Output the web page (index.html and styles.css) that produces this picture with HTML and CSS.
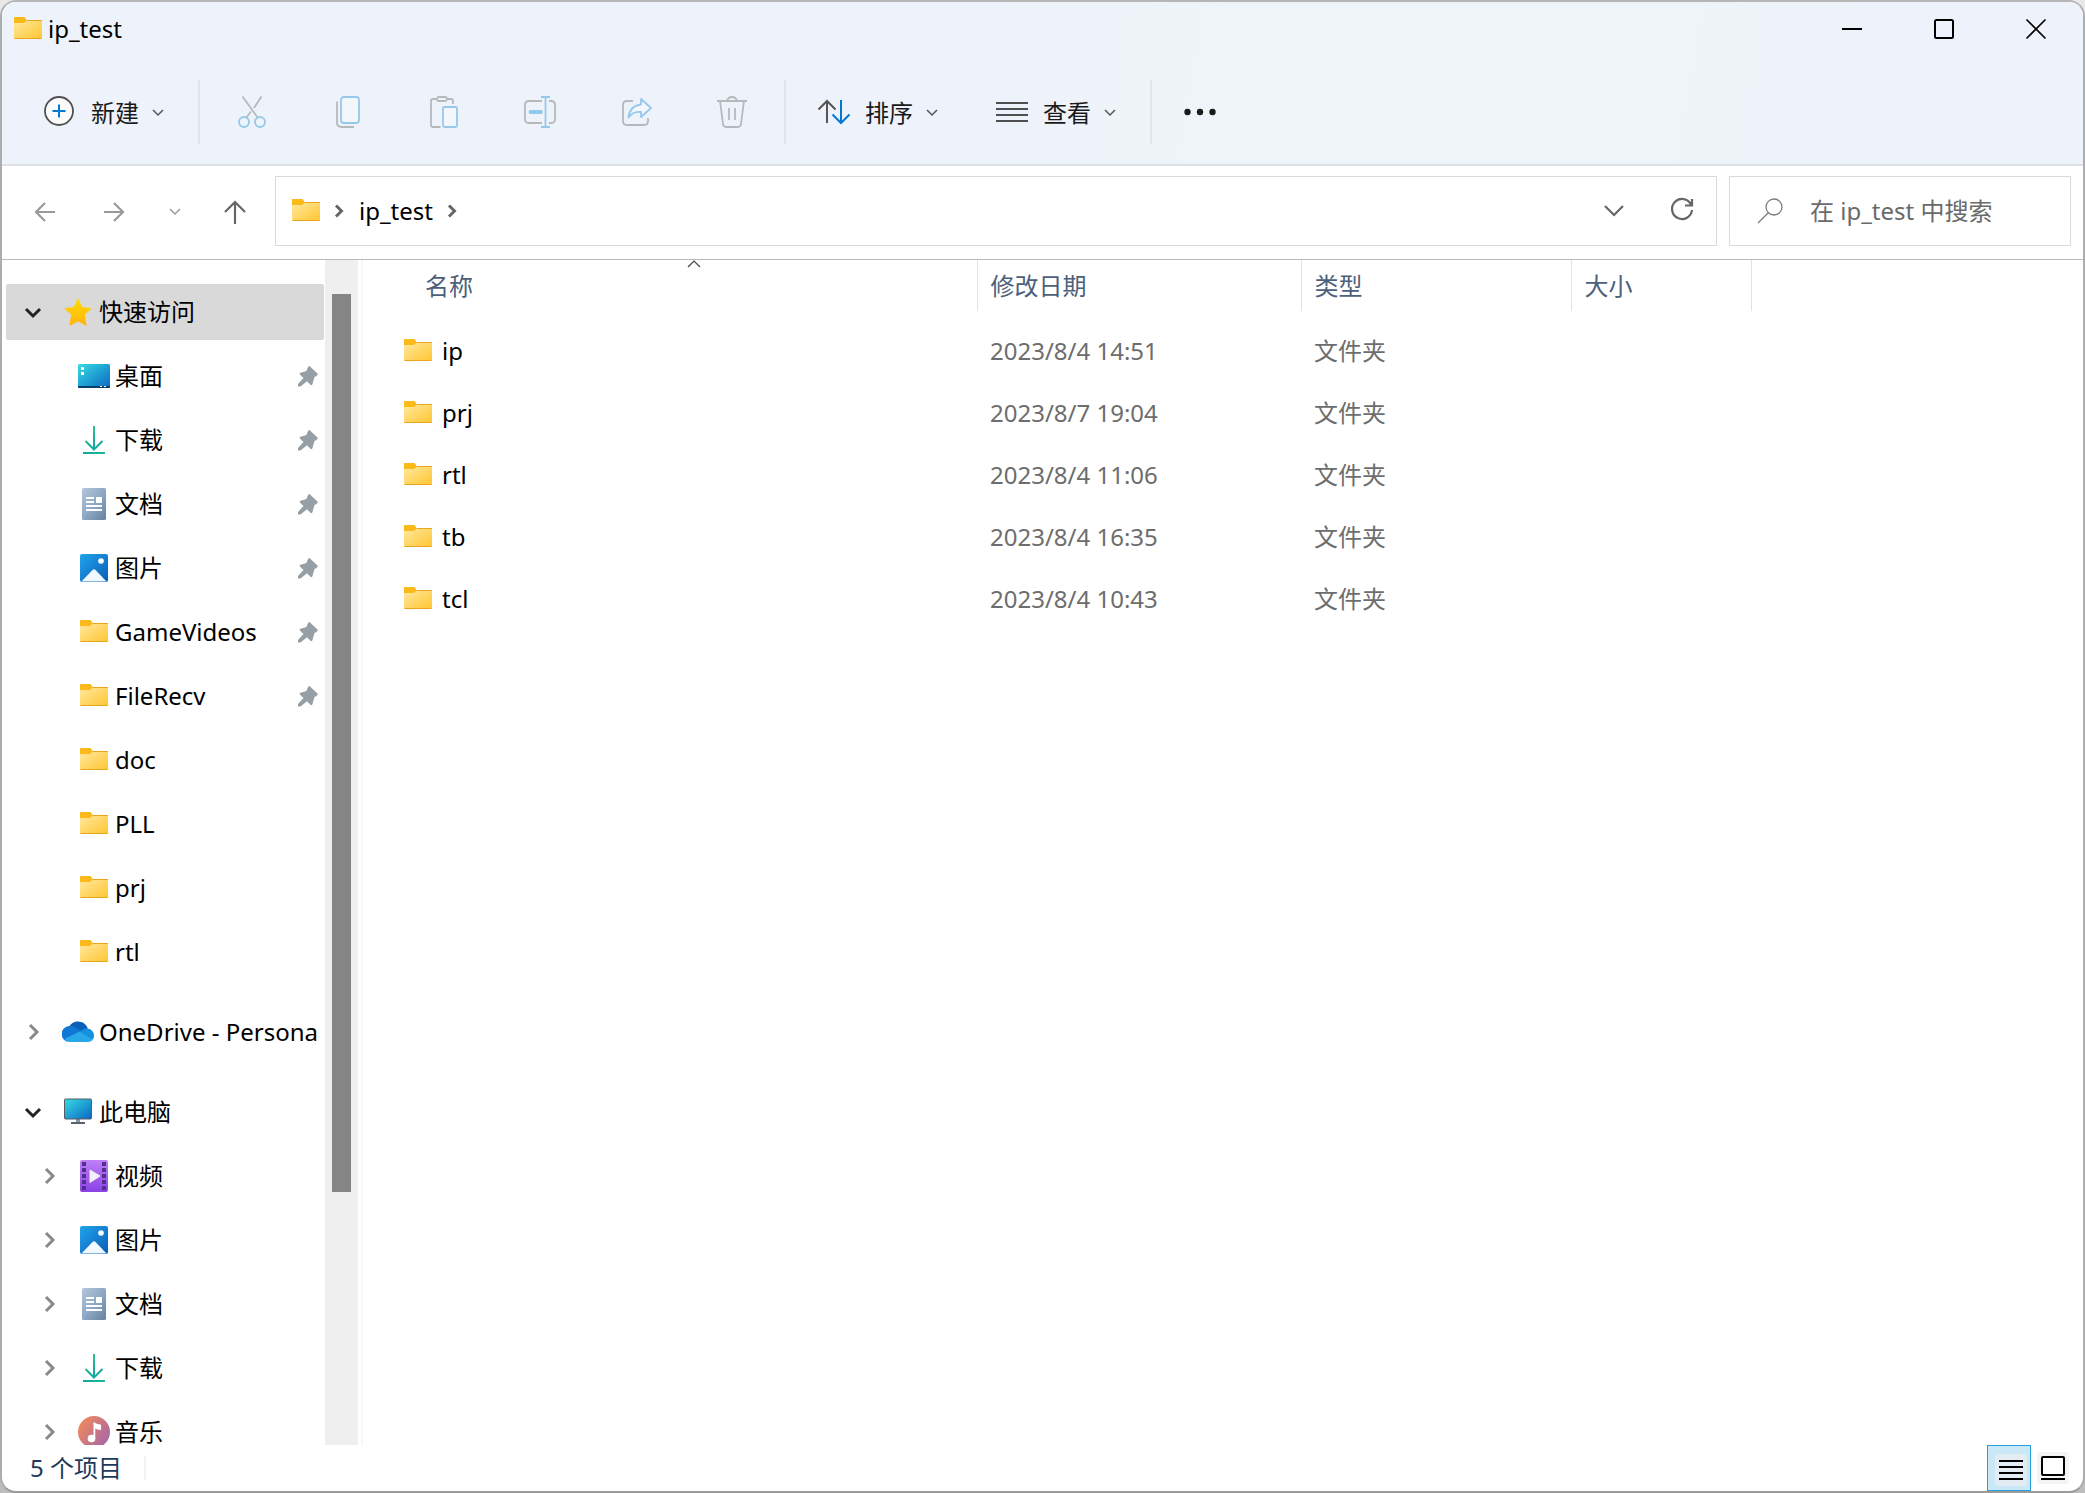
FILE: index.html
```html
<!DOCTYPE html>
<html lang="zh-CN">
<head>
<meta charset="utf-8">
<title>ip_test</title>
<link rel="stylesheet" href="styles.css">
</head>
<body>
<svg class="sprite" aria-hidden="true">
  <defs>
    <linearGradient id="g-folder" x1="0" y1="0" x2="1" y2="1"><stop offset="0" stop-color="#ffe8a0"/><stop offset="1" stop-color="#ffc62f"/></linearGradient>
    <linearGradient id="g-star" x1="0" y1="0" x2="0" y2="1"><stop offset="0" stop-color="#ffdc00"/><stop offset="1" stop-color="#ffb30f"/></linearGradient>
    <linearGradient id="g-screen" x1="0" y1="0" x2="1" y2="1"><stop offset="0" stop-color="#36dce4"/><stop offset="1" stop-color="#0a66c2"/></linearGradient>
    <linearGradient id="g-down" gradientUnits="userSpaceOnUse" x1="5" y1="3" x2="27" y2="29"><stop offset="0" stop-color="#3ccf86"/><stop offset="0.6" stop-color="#12a79b"/><stop offset="1" stop-color="#1dbb9a"/></linearGradient>
    <linearGradient id="g-doc" x1="0" y1="0" x2="1" y2="1"><stop offset="0" stop-color="#b4c7da"/><stop offset="0.5" stop-color="#8fa9c5"/><stop offset="1" stop-color="#65829f"/></linearGradient>
    <linearGradient id="g-pic" x1="0" y1="0" x2="1" y2="1"><stop offset="0" stop-color="#1fa5ec"/><stop offset="1" stop-color="#0b5cb4"/></linearGradient>
    <linearGradient id="g-video" x1="0" y1="0" x2="0" y2="1"><stop offset="0" stop-color="#bd80f8"/><stop offset="1" stop-color="#8b41e6"/></linearGradient>
    <linearGradient id="g-music" x1="0" y1="0.2" x2="1" y2="0.9"><stop offset="0" stop-color="#f28a5a"/><stop offset="1" stop-color="#a264ae"/></linearGradient>
  </defs>
  <symbol id="folder" viewBox="0 0 32 32">
    <path d="M2 5a1 1 0 0 1 1-1h8.500c1 0 1.500.4 2 1.200L14.500 7v5H2z" fill="#fbba1a"/>
    <path d="M2 11c0-1 .3-1 1-1h8.500c1 0 1.500-.5 2-1.200.6-.9 1.200-1.300 2-1.300H30V25a1 1 0 0 1-1 1H3a1 1 0 0 1-1-1z" fill="url(#g-folder)"/>
    <path d="M14.500 7.500H30M2.500 25.500h27" stroke="#e9a51d" stroke-width="1" fill="none"/>
  </symbol>
  <symbol id="star" viewBox="0 0 32 32"><path d="M16 2l4.200 9 9.800 1.200-7.300 6.600L24.800 30 16 25.500 7.200 30l2.100-11.200L2 12.200 11.800 11z" fill="url(#g-star)"/></symbol>
  <symbol id="desktop" viewBox="0 0 32 32"><rect y="4" width="32" height="24" rx="1.500" fill="url(#g-screen)"/><path d="M0 26h32v1a1 1 0 0 1-1 1H1a1 1 0 0 1-1-1z" fill="#0d3f66"/><path d="M3 7h3v3H3zM3 12h3v3H3zM22 26h2v1h-2zM26 26h2v1h-2z" fill="#fff"/></symbol>
  <symbol id="download" viewBox="0 0 32 32"><path d="M16 2v23M7.500 17l8.500 8.500 8.500-8.500M5 29h22" fill="none" stroke="url(#g-down)" stroke-width="2"/></symbol>
  <symbol id="document" viewBox="0 0 32 32"><rect x="4" width="24" height="32" rx="1.500" fill="url(#g-doc)"/><path d="M8 9h8v2H8zM8 13h8v2H8zM18 9h6v6h-6zM8 17h16v2H8zM8 21h16v2H8z" fill="#fff"/></symbol>
  <symbol id="picture" viewBox="0 0 32 32"><rect x="2" y="2" width="28" height="28" rx="2" fill="url(#g-pic)"/><path d="M3.500 29.500L14.500 18q1.500-1.500 3 0l11 11.500z" fill="#f1f8ff"/><circle cx="23" cy="9" r="2.800" fill="#fff"/></symbol>
  <symbol id="video" viewBox="0 0 32 32"><rect x="2" width="28" height="32" rx="2" fill="url(#g-video)"/><path d="M4 2h4v4H4zM4 8h4v4H4zM4 14h4v4H4zM4 20h4v4H4zM4 26h4v4H4zM24 2h4v4h-4zM24 8h4v4h-4zM24 14h4v4h-4zM24 20h4v4h-4zM24 26h4v4h-4z" fill="#50308c"/><path d="M12 10l10 6-10 6.500z" fill="#f4effa" stroke="#f4effa" stroke-linejoin="round"/></symbol>
  <symbol id="music" viewBox="0 0 32 32"><circle cx="16" cy="16" r="16" fill="url(#g-music)"/><circle cx="13.500" cy="22.500" r="3.800" fill="#fff"/><path d="M15.500 6q5 3 7.500 2.500v5.500q-3 0-5.700-1.500V23h-1.800z" fill="#fff"/></symbol>
  <symbol id="computer" viewBox="0 0 32 32"><path d="M14 22h4v5h-4z" fill="#8a96a3"/><path d="M9 26h14v2H9z" fill="#56636f"/><rect x="2.500" y="3" width="27" height="20" rx="1" fill="url(#g-screen)" stroke="#575d63" stroke-width="1"/></symbol>
  <symbol id="cloud" viewBox="0 0 32 32"><path d="M7.500 10.500C9 7 12.500 5.500 16 5.500c4.500 0 8.500 2.800 9.800 7L17 17z" fill="#0a5fb8"/><path d="M8 26a8 8 0 0 1-.8-16c3.500-.4 5.500 1 8.300 2.700L20 15.500 5 25z" fill="#1078d4"/><path d="M17 16l5.500-3.200c5-1.600 9.500 2 9.500 6.800 0 2-.8 3.500-1.800 4.600z" fill="#1490df"/><path d="M2.500 23L17.500 15.500 30.500 24c-1.200 1.300-2.700 2-4.500 2H8c-2.300 0-4.200-1.200-5.500-3z" fill="#28a8ea"/></symbol>
  <symbol id="pin" viewBox="0 0 22 22"><path d="M12.500 1L21 9q-.2 1.500-3.500 3l-2.200 7.500c-.4 1-1.100 1-1.800.3L10 16.300l-6.500 5.200H1V19l5.500-6L3 9.500c-.6-.7-.4-1.400.5-1.700L9.500 6c1-3.500 2-5 3-5z" fill="#959fa5"/></symbol>
  <symbol id="open" viewBox="0 0 24 24"><path d="M5 9l7 7 7-7" fill="none" stroke="#222" stroke-width="3"/></symbol>
  <symbol id="closed" viewBox="0 0 24 24"><path d="M9 5l7 7-7 7" fill="none" stroke="#8a8a8a" stroke-width="3"/></symbol>
  <symbol id="crumb" viewBox="0 0 12 24"><path d="M3 6.500l5.500 5.500L3 17.500" fill="none" stroke="#666" stroke-width="3"/></symbol>
  <symbol id="chev" viewBox="0 0 12 12"><path d="M1 4l5 5 5-5" fill="none" stroke="currentColor" stroke-width="1.500"/></symbol>
</svg>

<div class="window">
  <header class="head">
    <div class="titlebar">
      <svg class="icon"><use href="#folder"/></svg>
      <h1 class="title">ip_test</h1>
      <button class="caption" aria-label="最小化"><svg viewBox="0 0 20 20"><path d="M0 10h20" stroke="#000" stroke-width="2"/></svg></button>
      <button class="caption" aria-label="最大化"><svg viewBox="0 0 20 20"><rect x="1" y="1" width="18" height="18" rx="1.500" fill="none" stroke="#000" stroke-width="2"/></svg></button>
      <button class="caption" aria-label="关闭"><svg viewBox="0 0 20 20"><path d="M.5.500l19 19M19.500.500l-19 19" stroke="#000" stroke-width="1.600"/></svg></button>
    </div>
    <div class="toolbar">
      <button class="menu"><svg class="icon" viewBox="0 0 32 32"><circle cx="15" cy="15" r="14" fill="#fbfbfb" stroke="#505050" stroke-width="1.800"/><path d="M15 8.500v13M8.500 15h13" stroke="#0078d4" stroke-width="2"/></svg><span>新建</span><svg class="chev"><use href="#chev"/></svg></button>
      <span class="sep"></span>
      <button class="tool" aria-label="剪切"><svg class="icon" viewBox="0 0 32 32" fill="none" stroke-width="1.800"><path d="M6.500.500L22 22M25.500.500L18 12M15 15.500L10 22" stroke="#b6b9bb"/><circle cx="8" cy="26" r="5" stroke="#96c8ec"/><circle cx="24" cy="26" r="5" stroke="#96c8ec"/></svg></button>
      <button class="tool" aria-label="复制"><svg class="icon" viewBox="0 0 32 32" fill="none" stroke-width="1.800"><path d="M5 5.500v21q0 4.500 4.500 4.500H22" stroke="#b6b9bb"/><rect x="9" y="1" width="18" height="26" rx="3" fill="#f3f6fa" stroke="#96c8ec"/></svg></button>
      <button class="tool" aria-label="粘贴"><svg class="icon" viewBox="0 0 32 32" fill="none" stroke-width="1.800"><path d="M8 3H5Q3 3 3 5v24q0 2 2 2h7.500M19 3h3.500Q25 3 25 5v3" stroke="#b6b9bb"/><rect x="9" y="1" width="10" height="4" rx="2" stroke="#b6b9bb"/><rect x="15" y="11" width="14" height="20" rx="1.500" fill="#f3f6fa" stroke="#96c8ec"/></svg></button>
      <button class="tool" aria-label="重命名"><svg class="icon" viewBox="0 0 32 32" fill="none" stroke-width="1.800"><path d="M18 5H5Q1 5 1 9v14q0 4 4 4h13M25 5h2q4 0 4 4v14q0 4-4 4h-2" stroke="#b6b9bb"/><path d="M17 1h9M17 31h9M21.500 1v30" stroke="#96c8ec"/><path d="M6.500 16H17" stroke="#96c8ec" stroke-width="4" stroke-linecap="round"/></svg></button>
      <button class="tool" aria-label="共享"><svg class="icon" viewBox="0 0 32 32" fill="none" stroke-width="1.800"><path d="M13 5H7Q3 5 3 9v16q0 4 4 4h17q4 0 4-4v-3" stroke="#b6b9bb"/><path d="M21 3l10 9-10 9v-5q-8-1-12.500 5.500Q9.500 10 21 8.500z" fill="#f3f6fa" stroke="#96c8ec" stroke-linejoin="round"/></svg></button>
      <button class="tool" aria-label="删除"><svg class="icon" viewBox="0 0 32 32" fill="none" stroke="#b6b9bb" stroke-width="1.800"><path d="M1 5h30M11 5q1-4 5-4t5 4M4 5l3 23q.4 3 3 3h12q2.600 0 3-3l3-23M13 12v12M19 12v12"/></svg></button>
      <span class="sep"></span>
      <button class="menu"><svg class="icon" viewBox="0 0 32 32" fill="none" stroke-width="2"><path d="M9 27V5M.5 13.500L9 5l8.500 8.500" stroke="#555"/><path d="M23 4v23M14.500 18.500L23 27l8.500-8.500" stroke="#0078d4"/></svg><span>排序</span><svg class="chev"><use href="#chev"/></svg></button>
      <button class="menu"><svg class="icon" viewBox="0 0 32 32" stroke="#505050" stroke-width="2"><path d="M0 7h32M0 13h32M0 19h32M0 25h32"/></svg><span>查看</span><svg class="chev"><use href="#chev"/></svg></button>
      <span class="sep"></span>
      <button class="more" aria-label="查看更多"><svg class="icon" viewBox="0 0 32 32" fill="#1a1a1a"><circle cx="3.500" cy="16" r="3.200"/><circle cx="16" cy="16" r="3.200"/><circle cx="28.500" cy="16" r="3.200"/></svg></button>
    </div>
  </header>

  <nav class="addressrow" aria-label="地址栏">
    <button class="go" aria-label="后退"><svg class="arrow" viewBox="0 0 24 24"><path d="M21 13H2M11 4l-9 9 9 9" stroke="#999"/></svg></button>
    <button class="go" aria-label="前进"><svg class="arrow" viewBox="0 0 24 24"><path d="M2 13h19M12 4l9 9-9 9" stroke="#999"/></svg></button>
    <button class="go recent" aria-label="最近位置"><svg class="chev"><use href="#chev"/></svg></button>
    <button class="go up" aria-label="向上"><svg class="arrow" viewBox="0 0 24 24"><path d="M12 25V3M2 13L12 3l10 10" stroke="#666"/></svg></button>
    <div class="address">
      <svg class="icon"><use href="#folder"/></svg>
      <svg class="crumb"><use href="#crumb"/></svg>
      <a class="path" href="#">ip_test</a>
      <svg class="crumb"><use href="#crumb"/></svg>
      <button class="end" aria-label="历史记录"><svg class="arrow" viewBox="0 0 24 24"><path d="M3 7l9 9 9-9" stroke="#666"/></svg></button>
      <button class="end" aria-label="刷新"><svg class="arrow" viewBox="0 0 24 24"><path d="M21 5.500A10 10 0 1 0 22 11M22 0v6.500h-7" stroke="#666"/></svg></button>
    </div>
    <label class="search">
      <svg class="lens" viewBox="0 0 26 26" fill="none" stroke="#7b7b7b" stroke-width="1.300"><circle cx="17" cy="9" r="8"/><path d="M11.500 14.500L1 25"/></svg>
      <input type="search" placeholder="在 ip_test 中搜索" aria-label="搜索">
    </label>
  </nav>

  <main class="body">
    <div class="tree">
      <ul>
        <li><button class="row selected"><svg class="exp"><use href="#open"/></svg><svg class="icon"><use href="#star"/></svg><span>快速访问</span></button>
          <ul>
            <li><button class="row"><svg class="icon"><use href="#desktop"/></svg><span>桌面</span><svg class="pin"><use href="#pin"/></svg></button></li>
            <li><button class="row"><svg class="icon"><use href="#download"/></svg><span>下载</span><svg class="pin"><use href="#pin"/></svg></button></li>
            <li><button class="row"><svg class="icon"><use href="#document"/></svg><span>文档</span><svg class="pin"><use href="#pin"/></svg></button></li>
            <li><button class="row"><svg class="icon"><use href="#picture"/></svg><span>图片</span><svg class="pin"><use href="#pin"/></svg></button></li>
            <li><button class="row"><svg class="icon"><use href="#folder"/></svg><span>GameVideos</span><svg class="pin"><use href="#pin"/></svg></button></li>
            <li><button class="row"><svg class="icon"><use href="#folder"/></svg><span>FileRecv</span><svg class="pin"><use href="#pin"/></svg></button></li>
            <li><button class="row"><svg class="icon"><use href="#folder"/></svg><span>doc</span></button></li>
            <li><button class="row"><svg class="icon"><use href="#folder"/></svg><span>PLL</span></button></li>
            <li><button class="row"><svg class="icon"><use href="#folder"/></svg><span>prj</span></button></li>
            <li><button class="row"><svg class="icon"><use href="#folder"/></svg><span>rtl</span></button></li>
          </ul>
        </li>
        <li><button class="row"><svg class="exp"><use href="#closed"/></svg><svg class="icon"><use href="#cloud"/></svg><span>OneDrive - Persona</span></button></li>
        <li><button class="row"><svg class="exp"><use href="#open"/></svg><svg class="icon"><use href="#computer"/></svg><span>此电脑</span></button>
          <ul>
            <li><button class="row"><svg class="exp"><use href="#closed"/></svg><svg class="icon"><use href="#video"/></svg><span>视频</span></button></li>
            <li><button class="row"><svg class="exp"><use href="#closed"/></svg><svg class="icon"><use href="#picture"/></svg><span>图片</span></button></li>
            <li><button class="row"><svg class="exp"><use href="#closed"/></svg><svg class="icon"><use href="#document"/></svg><span>文档</span></button></li>
            <li><button class="row"><svg class="exp"><use href="#closed"/></svg><svg class="icon"><use href="#download"/></svg><span>下载</span></button></li>
            <li><button class="row"><svg class="exp"><use href="#closed"/></svg><svg class="icon"><use href="#music"/></svg><span>音乐</span></button></li>
          </ul>
        </li>
      </ul>
    </div>
    <div class="scrollbar"><div class="thumb"></div></div>
    <div class="files">
      <table>
        <colgroup><col class="c-name"><col class="c-date"><col class="c-type"><col class="c-size"><col></colgroup>
        <thead>
          <tr>
            <th class="name"><button>名称<svg class="sort" viewBox="0 0 14 8"><path d="M1 7l6-6 6 6" fill="none" stroke="#444" stroke-width="1.200"/></svg></button></th>
            <th><button>修改日期</button></th>
            <th><button>类型</button></th>
            <th><button>大小</button></th>
            <td></td>
          </tr>
        </thead>
        <tbody>
          <tr><td class="name"><a href="#"><svg class="icon"><use href="#folder"/></svg>ip</a></td><td>2023/8/4 14:51</td><td>文件夹</td><td></td><td></td></tr>
          <tr><td class="name"><a href="#"><svg class="icon"><use href="#folder"/></svg>prj</a></td><td>2023/8/7 19:04</td><td>文件夹</td><td></td><td></td></tr>
          <tr><td class="name"><a href="#"><svg class="icon"><use href="#folder"/></svg>rtl</a></td><td>2023/8/4 11:06</td><td>文件夹</td><td></td><td></td></tr>
          <tr><td class="name"><a href="#"><svg class="icon"><use href="#folder"/></svg>tb</a></td><td>2023/8/4 16:35</td><td>文件夹</td><td></td><td></td></tr>
          <tr><td class="name"><a href="#"><svg class="icon"><use href="#folder"/></svg>tcl</a></td><td>2023/8/4 10:43</td><td>文件夹</td><td></td><td></td></tr>
        </tbody>
      </table>
    </div>
  </main>

  <footer class="status">
    <span class="count">5 个项目</span>
    <button class="view on" aria-label="详细信息"><svg class="icon" viewBox="0 0 32 32"><rect width="32" height="32" rx="4" fill="#e2ecf2"/><path d="M4 7h24M4 13h24M4 19h24M4 25h24" stroke="#000" stroke-width="2"/></svg></button>
    <button class="view" aria-label="大缩略图"><svg class="icon" viewBox="0 0 32 32"><rect width="32" height="32" rx="4" fill="#f4f4f4"/><rect x="5" y="5" width="22" height="18" rx="1" fill="#fff" stroke="#000" stroke-width="2"/><path d="M4 27h24" stroke="#000" stroke-width="2"/></svg></button>
  </footer>
</div>
</body>
</html>
```

FILE: styles.css
```css
* { box-sizing: border-box; }

body {
  margin: 0;
  background: linear-gradient(#e9e9e9, #bdbdbd);
  color: #000;
  font: 24px/32px "Noto Sans", "Noto Sans CJK SC", sans-serif;
}

button, input {
  margin: 0;
  padding: 0;
  border: 0;
  background: none;
  color: inherit;
  font: inherit;
}

a { color: inherit; text-decoration: none; }
ul { margin: 0; padding: 0; list-style: none; }
svg { display: block; flex: none; overflow: visible; }

.sprite { position: absolute; width: 0; height: 0; overflow: hidden; }
.icon { width: 32px; height: 32px; }
.chev { width: 12px; height: 12px; }

.window {
  display: flex;
  flex-direction: column;
  height: 100vh;
  overflow: hidden;
  border: 2px solid #adadad;
  border-top-color: #b6b6b6;
  border-bottom-color: #9a9a9a;
  border-radius: 16px;
  background: #fff;
}

/* Title bar and command bar */
.head {
  border-bottom: 2px solid #dde2e6;
  background: linear-gradient(100deg, #eef3fb 48%, #eff4f8 58%, #eff4f8 80%, #eef3fb 88%);
}

.titlebar {
  display: flex;
  align-items: center;
  height: 54px;
  padding: 0 1px 0 10px;
}

.title {
  flex: 1;
  margin: 0;
  padding-left: 4px;
  font-size: 24px;
  font-weight: 400;
}

.caption {
  display: grid;
  place-items: center;
  width: 92px;
  height: 100%;
}

.caption svg { width: 20px; height: 20px; }

.toolbar {
  display: flex;
  align-items: center;
  height: 108px;
  padding: 4px 14px 0;
  color: #1a1a1a;
}

.menu {
  display: flex;
  align-items: center;
  height: 64px;
  padding: 0 30px 0 28px;
}

.menu span { padding: 2px 13px 0 15px; }
.menu .chev { color: #555; }

.tool, .more {
  display: grid;
  place-items: center;
  width: 96px;
  height: 64px;
}

.more { width: 88px; }

.sep {
  width: 2px;
  height: 64px;
  margin: 0 4px;
  background: #e1e5e9;
}

/* Address row */
.addressrow {
  display: flex;
  align-items: center;
  padding: 10px 12px 13px 10px;
  border-bottom: 1px solid #b9b9b9;
}

.go {
  display: grid;
  place-items: center;
  width: 68px;
  height: 70px;
}

.recent { width: 54px; color: #999; }
.up { width: 66px; }

.arrow {
  width: 24px;
  height: 24px;
  fill: none;
  stroke-width: 2.2;
}

.address {
  display: flex;
  flex: 1;
  align-items: center;
  height: 70px;
  margin: 0 12px 0 7px;
  padding-left: 14px;
  border: 1px solid #d9d9d9;
}

.crumb { width: 12px; height: 24px; margin: 0 14px 0 11px; }
.path { padding-right: 2px; }
.end { display: grid; place-items: center; width: 68px; height: 100%; }
.crumb + .end { margin-left: auto; }

.search {
  display: flex;
  align-items: center;
  width: 342px;
  height: 70px;
  padding: 0 8px 0 27px;
  border: 1px solid #d9d9d9;
}

.lens { width: 26px; height: 26px; margin-right: 27px; }
.search input { flex: 1; min-width: 0; outline: 0; }
.search input::placeholder { color: #6a6a6a; opacity: 1; }

/* Navigation tree */
.body {
  display: flex;
  flex: 1;
  min-height: 0;
}

.tree {
  width: 323px;
  padding: 20px 1px 0 4px;
  overflow: hidden;
}

.tree > ul { display: grid; gap: 16px; }

.row {
  display: flex;
  align-items: center;
  width: 100%;
  height: 64px;
  padding: 0 5px 0 56px;
  line-height: 24px;
  text-align: left;
  white-space: nowrap;
}

.row:has(.exp) { padding-left: 15px; }
ul ul .row { padding-left: 72px; }
ul ul .row:has(.exp) { padding-left: 31px; }

.selected {
  height: 56px;
  margin: 4px 0;
  border-radius: 2px;
  background: #d9d9d9;
}

.exp { width: 24px; height: 24px; margin-right: 17px; }
.row span { padding-left: 5px; }
.pin { width: 22px; height: 22px; margin-left: auto; }

.scrollbar {
  width: 33px;
  padding: 34px 7px 0;
  background: #efefef;
}

.thumb { height: 78%; background: #858585; }

/* File list */
.files {
  flex: 1;
  min-width: 0;
  margin-left: 3px;
  border-left: 2px solid #f7f7f7;
}

table {
  width: 100%;
  border-collapse: collapse;
  table-layout: fixed;
}

.c-name { width: 614px; }
.c-date { width: 324px; }
.c-type { width: 270px; }
.c-size { width: 180px; }

th, td { padding: 0; text-align: left; font-weight: 400; }

th {
  border-right: 1px solid #e3e3e3;
  color: #4c607a;
}

th.name { padding-left: 49px; }

th button {
  position: relative;
  display: block;
  width: 100%;
  height: 51px;
  padding-left: 13px;
  text-align: left;
}

.sort {
  position: absolute;
  top: 0;
  left: 50%;
  width: 14px;
  height: 8px;
  margin-left: -7px;
}

thead::after { content: ""; display: block; height: 9px; }

tbody td {
  height: 62px;
  padding-left: 13px;
  color: #6d6d6d;
}

tbody .name { padding-left: 39px; color: #000; }
.name a { display: flex; align-items: center; gap: 8px; }

/* Status bar */
.status {
  display: flex;
  align-items: center;
  height: 46px;
  padding-right: 8px;
}

.count {
  margin: 0 auto 0 0;
  padding: 0 22px 0 28px;
  border-right: 2px solid #f2f2f2;
  line-height: 24px;
  color: #1e395b;
}

.view {
  display: grid;
  place-items: center;
  width: 44px;
  height: 46px;
}

.on {
  padding: 4px 0 0 4px;
  border: 1px solid #26a0da;
  background: #cbe8f6;
}
```
